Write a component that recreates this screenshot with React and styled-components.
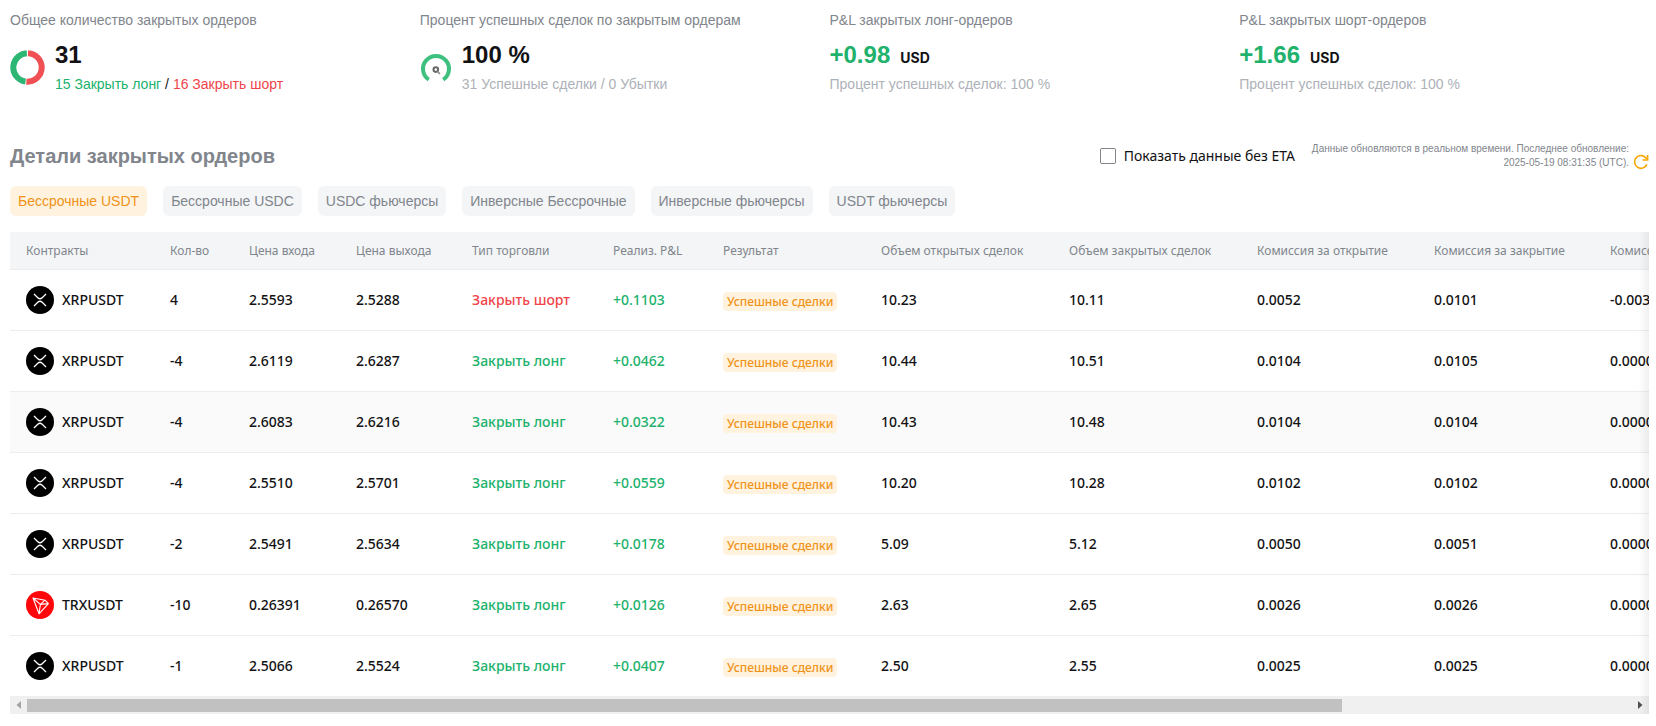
import React, { useEffect, useRef, useState } from "react";
import styled, { createGlobalStyle } from "styled-components";

const GlobalStyle = createGlobalStyle`
  * { box-sizing: border-box; }
  body { margin: 0; background: #fff; color: #121214; font-family: "Liberation Sans", Arial, sans-serif; }
  button { font: inherit; border: 0; padding: 0; cursor: pointer; }
`;

const GREEN = "#20b26c";
const RED = "#ef454a";

const Page = styled.main`
  padding: 9px 7px 12px 10px;
`;

const Stats = styled.section`
  display: grid;
  grid-template-columns: repeat(4, 1fr);
`;

const StatTitle = styled.h3`
  margin: 0;
  font-size: 14px;
  font-weight: 400;
  line-height: 22px;
  color: #81858c;
`;

const StatBody = styled.div`
  display: flex;
  align-items: center;
  gap: ${(p) => p.$gap || 0}px;
  margin-top: 7px;
`;

const StatValue = styled.p`
  margin: 0;
  font-size: 24px;
  font-weight: 700;
  line-height: 34px;
  color: ${(p) => p.$color || "#121214"};
`;

const Unit = styled.span`
  margin-left: 10px;
  font-family: Inter, sans-serif;
  font-size: 14px;
  font-weight: 700;
  line-height: 16px;
  color: #121214;
`;

const StatNote = styled.p`
  margin: 0;
  font-size: 14px;
  line-height: 24px;
  color: ${(p) => (p.$dark ? "#121214" : "#adb1b8")};
`;

const Tone = styled.span`
  color: ${(p) => p.$color};
`;

const Heading = styled.div`
  display: flex;
  align-items: center;
  justify-content: space-between;
  margin-top: 42px;
  height: 36px;
`;

const Title = styled.h2`
  margin: 0;
  font-size: 20px;
  line-height: 28px;
  color: #81858c;
`;

const HeadingTools = styled.div`
  display: flex;
  align-items: center;
`;

const CheckLabel = styled.label`
  display: flex;
  align-items: center;
  gap: 8px;
  margin-right: 14px;
  font-family: "Noto Sans", sans-serif;
  font-size: 14px;
  line-height: 22px;
`;

const Checkbox = styled.input`
  appearance: none;
  width: 16px;
  height: 16px;
  margin: 0;
  border: 1px solid #81858c;
  border-radius: 2px;
  background: #fff;
  &:checked { background: #f7a600; }
`;

const Updated = styled.p`
  margin: 0;
  max-width: 320px;
  font-size: 10px;
  line-height: 14px;
  text-align: right;
  color: #81858c;
`;

const Refresh = styled.button`
  display: flex;
  align-self: flex-end;
  margin-left: 4px;
  background: none;
`;

const Tabs = styled.nav`
  display: flex;
  flex-wrap: wrap;
  gap: 16px;
  margin-top: 12px;
`;

const Tab = styled.button`
  && { padding: 0 8px; }
  height: 30px;
  border-radius: 6px;
  font-size: 14px;
  line-height: 30px;
  color: ${(p) => (p.$active ? "#f09319" : "#81858c")};
  background: ${(p) => (p.$active ? "#fff2de" : "#f3f5f7")};
`;

const TableFrame = styled.section`
  position: relative;
  margin-top: 16px;
  &::after {
    content: "";
    position: absolute;
    inset: 0 0 0 auto;
    width: 10px;
    pointer-events: none;
    background: linear-gradient(to right, rgba(0, 0, 0, 0), rgba(0, 0, 0, 0.06));
  }
`;

const Scroller = styled.div`
  overflow-x: auto;
  scrollbar-width: none;
`;

const Table = styled.table`
  table-layout: fixed;
  width: 2001px;
  border-collapse: separate;
  border-spacing: 0;
  font-family: "Noto Sans", sans-serif;
  white-space: nowrap;
`;

const Col = styled.col`
  width: ${(p) => p.$w}px;
`;

const Th = styled.th`
  height: 38px;
  padding: 0 0 0 16px;
  border-bottom: 1px solid #ededed;
  background: #f3f5f7;
  font-size: 12px;
  font-weight: 400;
  line-height: 20px;
  text-align: left;
  color: #81858c;
`;

const Row = styled.tr`
  background: ${(p) => (p.$shaded ? "#fafafa" : "#fff")};
  &:last-child td { height: 60px; border-bottom: 0; }
`;

const Td = styled.td`
  height: 61px;
  padding: 0 0 0 16px;
  border-bottom: 1px solid #ededed;
  font-size: 14px;
  font-weight: 500;
  line-height: 22px;
  color: ${(p) => p.$color || "#121214"};
`;

const Contract = styled.div`
  display: flex;
  align-items: center;
  gap: 8px;
`;

const Badge = styled.span`
  display: inline-block;
  padding: 0 4px;
  border-radius: 4px;
  font-size: 12px;
  line-height: 19px;
  color: #f09319;
  background: #fff2de;
  vertical-align: middle;
`;

const ScrollBar = styled.div`
  display: flex;
  height: 18px;
  background: #f0f0f0;
`;

const ScrollArrow = styled.button`
  display: flex;
  align-items: center;
  justify-content: center;
  flex: 0 0 17px;
  background: none;
`;

const ScrollTrack = styled.div`
  flex: 1;
  padding: 3px 0 2px;
`;

const ScrollThumb = styled.div`
  height: 13px;
  background: #c1c1c1;
`;

const Ring = () => (
  <svg width="35" height="35" viewBox="0 0 35 35" fill="none" strokeWidth="6">
    <circle cx="17.5" cy="17.5" r="14.2" stroke="#f04f54" strokeDasharray="45 100" transform="rotate(-88 17.5 17.5)" />
    <circle cx="17.5" cy="17.5" r="14.2" stroke="#2bb673" strokeDasharray="41.6 100" transform="rotate(98 17.5 17.5)" />
  </svg>
);

const Gauge = () => (
  <svg width="32" height="35" viewBox="0 0 32 35" fill="none">
    <path d="M8.8 29.7A13 13 0 1 1 23.2 29.7" stroke="#3ec17f" strokeWidth="4" />
    <circle cx="15.8" cy="19.6" r="2.3" stroke="#666" strokeWidth="2" />
    <path d="M17.3 21.1 19.8 24.1" stroke="#888" strokeWidth="1.6" />
  </svg>
);

const XrpIcon = () => (
  <svg width="28" height="28" viewBox="0 0 28 28" fill="none">
    <circle cx="14" cy="14" r="14" fill="#000" />
    <path d="M8 8l3.8 3.7a3.2 3.2 0 0 0 4.4 0L20 8M8 20l3.8-3.7a3.2 3.2 0 0 1 4.4 0L20 20" stroke="#fff" strokeWidth="1.3" />
  </svg>
);

const TrxIcon = () => (
  <svg width="28" height="28" viewBox="0 0 28 28" fill="none">
    <circle cx="14" cy="14" r="14" fill="#ff060a" />
    <path d="M7 7l12 2.2 3.4 3.4L13 22.8zM7 7l7.4 6.4L13 22.8M14.4 13.4l4.6-4.2M14.4 13.4l8-.8" stroke="#fff" strokeWidth="1.1" strokeLinejoin="round" />
  </svg>
);

const RefreshIcon = () => (
  <svg width="16" height="16" viewBox="0 0 16 16" fill="none" stroke="#f7a600" strokeWidth="1.6">
    <path d="M13.6 4.8A6.4 6.4 0 1 0 13.9 10.4" />
    <path d="M14.6 1v5H9.6" />
  </svg>
);

const Arrow = ({ right }) => (
  <svg width="5" height="8" viewBox="0 0 5 8">
    <path d={right ? "M0 0l4.5 4L0 8z" : "M5 0L.5 4 5 8z"} fill={right ? "#505050" : "#a3a3a3"} />
  </svg>
);

const tabs = ["Бессрочные USDT", "Бессрочные USDC", "USDC фьючерсы", "Инверсные Бессрочные", "Инверсные фьючерсы", "USDT фьючерсы"];

const columns = [
  ["Контракты", 144],
  ["Кол-во", 79],
  ["Цена входа", 107],
  ["Цена выхода", 116],
  ["Тип торговли", 141],
  ["Реализ. P&L", 110],
  ["Результат", 158],
  ["Объем открытых сделок", 188],
  ["Объем закрытых сделок", 188],
  ["Комиссия за открытие", 177],
  ["Комиссия за закрытие", 176],
  ["Комиссия за финансирование", 417],
];

const rows = [
  ["XRPUSDT", "4", "2.5593", "2.5288", "short", "+0.1103", "10.23", "10.11", "0.0052", "0.0101", "-0.0030"],
  ["XRPUSDT", "-4", "2.6119", "2.6287", "long", "+0.0462", "10.44", "10.51", "0.0104", "0.0105", "0.0000"],
  ["XRPUSDT", "-4", "2.6083", "2.6216", "long", "+0.0322", "10.43", "10.48", "0.0104", "0.0104", "0.0000"],
  ["XRPUSDT", "-4", "2.5510", "2.5701", "long", "+0.0559", "10.20", "10.28", "0.0102", "0.0102", "0.0000"],
  ["XRPUSDT", "-2", "2.5491", "2.5634", "long", "+0.0178", "5.09", "5.12", "0.0050", "0.0051", "0.0000"],
  ["TRXUSDT", "-10", "0.26391", "0.26570", "long", "+0.0126", "2.63", "2.65", "0.0026", "0.0026", "0.0000"],
  ["XRPUSDT", "-1", "2.5066", "2.5524", "long", "+0.0407", "2.50", "2.55", "0.0025", "0.0025", "0.0000"],
];

function OrdersTable() {
  const scroller = useRef(null);
  const [thumb, setThumb] = useState({ width: 82, left: 0 });

  const measure = () => {
    const el = scroller.current;
    setThumb({ width: (el.clientWidth / el.scrollWidth) * 100, left: (el.scrollLeft / el.scrollWidth) * 100 });
  };

  useEffect(() => {
    measure();
    window.addEventListener("resize", measure);
    return () => window.removeEventListener("resize", measure);
  }, []);

  const move = (dx) => scroller.current.scrollBy({ left: dx });

  return (
    <TableFrame>
      <Scroller ref={scroller} onScroll={measure}>
        <Table>
          <colgroup>
            {columns.map(([name, w]) => <Col key={name} $w={w} />)}
          </colgroup>
          <thead>
            <tr>{columns.map(([name]) => <Th key={name} scope="col">{name}</Th>)}</tr>
          </thead>
          <tbody>
            {rows.map(([pair, qty, entry, exit, side, pnl, ...rest], i) => (
              <Row key={i} $shaded={i === 2}>
                <Td>
                  <Contract>
                    {pair === "TRXUSDT" ? <TrxIcon /> : <XrpIcon />}
                    {pair}
                  </Contract>
                </Td>
                <Td>{qty}</Td>
                <Td>{entry}</Td>
                <Td>{exit}</Td>
                <Td $color={side === "short" ? RED : GREEN}>{side === "short" ? "Закрыть шорт" : "Закрыть лонг"}</Td>
                <Td $color={GREEN}>{pnl}</Td>
                <Td><Badge>Успешные сделки</Badge></Td>
                {rest.map((value, j) => <Td key={j}>{value}</Td>)}
              </Row>
            ))}
          </tbody>
        </Table>
      </Scroller>
      <ScrollBar>
        <ScrollArrow aria-label="Прокрутить влево" onClick={() => move(-80)}><Arrow /></ScrollArrow>
        <ScrollTrack>
          <ScrollThumb style={{ width: `${thumb.width}%`, marginLeft: `${thumb.left}%` }} />
        </ScrollTrack>
        <ScrollArrow aria-label="Прокрутить вправо" onClick={() => move(80)}><Arrow right /></ScrollArrow>
      </ScrollBar>
    </TableFrame>
  );
}

export default function App() {
  const [active, setActive] = useState(0);
  return (
    <>
      <GlobalStyle />
      <Page>
        <Stats>
          <div>
            <StatTitle>Общее количество закрытых ордеров</StatTitle>
            <StatBody $gap={10}>
              <Ring />
              <div>
                <StatValue>31</StatValue>
                <StatNote $dark>
                  <Tone $color={GREEN}>15 Закрыть лонг</Tone> / <Tone $color={RED}>16 Закрыть шорт</Tone>
                </StatNote>
              </div>
            </StatBody>
          </div>
          <div>
            <StatTitle>Процент успешных сделок по закрытым ордерам</StatTitle>
            <StatBody $gap={10}>
              <Gauge />
              <div>
                <StatValue>100 %</StatValue>
                <StatNote>31 Успешные сделки / 0 Убытки</StatNote>
              </div>
            </StatBody>
          </div>
          <div>
            <StatTitle>P&amp;L закрытых лонг-ордеров</StatTitle>
            <StatBody>
              <div>
                <StatValue $color={GREEN}>+0.98<Unit>USD</Unit></StatValue>
                <StatNote>Процент успешных сделок: 100 %</StatNote>
              </div>
            </StatBody>
          </div>
          <div>
            <StatTitle>P&amp;L закрытых шорт-ордеров</StatTitle>
            <StatBody>
              <div>
                <StatValue $color={GREEN}>+1.66<Unit>USD</Unit></StatValue>
                <StatNote>Процент успешных сделок: 100 %</StatNote>
              </div>
            </StatBody>
          </div>
        </Stats>

        <Heading>
          <Title>Детали закрытых ордеров</Title>
          <HeadingTools>
            <CheckLabel>
              <Checkbox type="checkbox" />
              Показать данные без ETA
            </CheckLabel>
            <Updated>
              Данные обновляются в реальном времени. Последнее обновление: 2025-05-19 08:31:35 (UTC).
            </Updated>
            <Refresh aria-label="Обновить"><RefreshIcon /></Refresh>
          </HeadingTools>
        </Heading>

        <Tabs>
          {tabs.map((name, i) => (
            <Tab key={name} $active={i === active} onClick={() => setActive(i)}>{name}</Tab>
          ))}
        </Tabs>

        <OrdersTable />
      </Page>
    </>
  );
}
